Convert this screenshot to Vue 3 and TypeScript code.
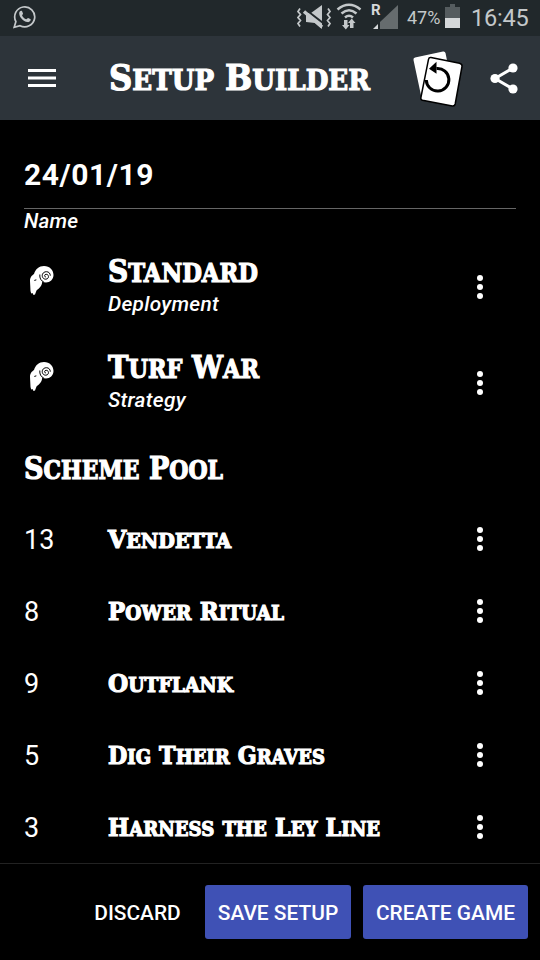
<script setup lang="ts">
import { defineComponent, h } from 'vue'

interface Heading { text: string; width: number }
interface Scheme extends Heading { id: number }

// Small-caps display lettering, fitted to a given width
const Caps = defineComponent({
  props: {
    text: { type: String, required: true },
    width: { type: Number, required: true },
    size: { type: Number, required: true },
  },
  setup(props) {
    return () => {
      const runs = props.text.match(/[A-Z]|[^A-Z]+/g) ?? []
      const height = Math.ceil(props.size * 1.2)
      return h('svg', { width: props.width + 6, height, class: 'caps' }, [
        h('text', {
          x: 0, y: props.size, 'font-size': props.size,
          textLength: props.width, lengthAdjust: 'spacingAndGlyphs',
        }, runs.map(r => h('tspan', {
          'font-size': /[A-Z]/.test(r) ? props.size : props.size * 0.81,
        }, r.toUpperCase()))),
      ])
    }
  },
})

const options: (Heading & { kind: string })[] = [
  { text: 'Standard', width: 150, kind: 'Deployment' },
  { text: 'Turf War', width: 151, kind: 'Strategy' },
]
const schemes: Scheme[] = [
  { id: 13, text: 'Vendetta', width: 123 },
  { id: 8, text: 'Power Ritual', width: 176 },
  { id: 9, text: 'Outflank', width: 125 },
  { id: 5, text: 'Dig Their Graves', width: 217 },
  { id: 3, text: 'Harness the Ley Line', width: 272 },
]
</script>

<template>
  <div class="screen">
    <div class="status">
      <svg class="whatsapp" width="24" height="24" viewBox="0 0 24 24">
        <path d="M1.2 22.2 2.9 16.6A10 10 0 1 1 7 20.7Z" fill="none" stroke="#c4c8ca" stroke-width="1.7" />
        <path d="M6.2 8.2c0-1.2 1-2.4 1.9-2.4.7 0 .9.2 1.1.8l.8 2c.2.5-.9 1.4-.9 1.8.8 1.8 2.2 3.1 4.1 3.9.5.2 1.3-1.5 1.9-1.3l2.2 1c.5.3.5.6.3 1.3-.4 1.3-1.9 2-3.1 1.8-4.5-.8-8.3-5.1-8.3-8.9Z" fill="#c4c8ca" />
      </svg>
      <svg class="indicators" width="128" height="36" viewBox="0 0 128 36">
        <path d="M3.5 8.500 1.500 11.500 4 14.500 1.500 17.500 4 20.500 1.500 23.500 3.500 26.500M31.500 8.500l2 3-2.500 3 2.500 3-2.500 3 2.500 3-2 3" transform="translate(-.5)" fill="none" stroke="#c4c8ca" stroke-width="1.700" />
        <path d="M9 13h5L25 5v24l-7-6-9-1Z" fill="#c4c8ca" />
        <path d="M8 9 28 24.500" stroke="#21282b" stroke-width="2" />
        <path d="M7 11.500 25 27" stroke="#c4c8ca" stroke-width="3.500" />
        <path d="M41 9.500Q52.500 0 64 9.500M45 13.500q7.500-6.500 15 0M48.500 17.500q4-3.500 8 0" transform="translate(-.5)" fill="none" stroke="#c4c8ca" stroke-width="2.500" />
        <path d="M47 20h3.500v5h2L48.800 29.500 45 25h2Zm6 8v-5h-2l3.700-4.500L58.500 23h-2v5Z" fill="#c4c8ca" />
        <text x="74" y="15" class="roaming">R</text>
        <path d="M101 5v24H83V22Z" fill="#666c6e" />
        <path d="M81 24v5h-5Z" fill="#d5d8da" />
      </svg>
      <span class="percent">47%</span>
      <svg class="battery" width="15" height="24" viewBox="0 0 15 24">
        <path d="M0 3h5V0h5v3h5v12H0Z" fill="#555c5f" /><path d="M0 14h15v10H0Z" fill="#d5d8da" />
      </svg>
      <span class="clock">16:45</span>
    </div>

    <header class="appbar">
      <svg class="menu" width="28" height="19" viewBox="0 0 28 19">
        <path d="M0 0h28v3H0ZM0 7.500h28v3H0ZM0 15h28v3H0Z" fill="#fff" />
      </svg>
      <Caps class="title" text="Setup Builder" :width="261" :size="35" />
      <svg class="cards" width="52" height="58" viewBox="0 0 52 58">
        <path d="M3 6.500 31 .5q2-.4 2.500 1.500L42 44 10 49 1.500 9Q1 7 3 6.500Z" fill="#fff" />
        <path d="M19 6.500 47.500 12.200Q50.500 13 50 15.500L43.200 53Q42.700 55.400 40.300 55L10.500 49.300Q8.400 48.800 8.900 46.500L16.500 8.300Q17 6.100 19 6.500Z" fill="#fff" stroke="#000" stroke-width="1.500" />
        <path d="M14.300 29A11.300 11.300 0 1 0 24.500 17.500" fill="none" stroke="#000" stroke-width="3" />
        <path d="M17 17.800 24.500 10.800v12Z" fill="#000" />
      </svg>
      <svg class="share" width="28" height="31" viewBox="0 0 28 31">
        <path d="M23 5 5 15.500 23 26" fill="none" stroke="#fff" stroke-width="3" />
        <circle cx="23" cy="5" r="4.600" fill="#fff" /><circle cx="5" cy="15.500" r="4.600" fill="#fff" /><circle cx="23" cy="26" r="4.600" fill="#fff" />
      </svg>
    </header>

    <main>
      <div class="field"><div class="date">24/01/19</div><label>Name</label></div>
      <div v-for="o in options" :key="o.kind" class="option">
        <svg class="ram" width="24" height="30" viewBox="0 0 24 30">
          <path d="M0 15C0 11 2 9.500 4 8 5.500 3 9 0 14 0 19.800 0 23.500 4 23.500 9c0 4.500-3.500 7.500-7.500 7.500-1.500 0-2.800-.3-3.800-.8-.2 4-2.700 6.300-5.700 8.800L5 28.500 3.500 29 2.500 27l-1.300.5L.5 25Z" fill="#fff" />
          <path d="M16 10.800c-1.500.6-2.300-2.300.2-2.500 3.200 0 3 4.900-.4 4.900-4.700 0-5-7.300.6-7.500 2.600 0 3.900 1.900 3.900 4M9.800 8.500c-.3 3.500 1 6.300 4 7.500" fill="none" stroke="#000" stroke-width="1" />
          <path d="M3.800 14.500q1.500-1.500 3-.8-1 1.300-3 .8Z" fill="#000" />
        </svg>
        <div class="words">
          <Caps :text="o.text" :width="o.width" :size="31" />
          <div class="kind">{{ o.kind }}</div>
        </div>
        <span class="more"><i /><i /><i /></span>
      </div>
      <h2><Caps text="Scheme Pool" :width="199" :size="31" /></h2>
      <div v-for="s in schemes" :key="s.id" class="scheme">
        <span class="num">{{ s.id }}</span>
        <Caps class="name" :text="s.text" :width="s.width" :size="24.500" />
        <span class="more"><i /><i /><i /></span>
      </div>
    </main>

    <footer>
      <button class="plain">DISCARD</button>
      <button class="save">SAVE SETUP</button>
      <button class="create">CREATE GAME</button>
    </footer>
  </div>
</template>

<style>
body { margin: 0; background: #000; }
</style>

<style scoped>
.screen { width: 540px; height: 960px; display: flex; flex-direction: column; overflow: hidden; background: #000; color: #fff; font-family: Roboto, sans-serif; }
.status { height: 36px; flex: none; display: flex; align-items: flex-start; background: #21282b; color: #c4c8ca; }
.whatsapp { margin: 5px 0 0 13px; }
.indicators { margin-left: 260px; flex: none; }
.roaming { font: bold 15px Roboto, sans-serif; fill: #d5d8da; }
.percent { width: 38px; margin-left: -18px; font-size: 18px; line-height: 36px; }
.battery { margin-top: 4px; }
.clock { margin-left: 11px; font-size: 23.5px; line-height: 36px; letter-spacing: -.2px; }
.appbar { height: 84px; flex: none; display: flex; align-items: flex-start; background: #2d343a; }
.menu { margin: 33px 0 0 28px; }
.caps { display: block; flex: none; overflow: visible; font-family: "DejaVu Serif", serif; font-weight: 700; fill: #fff; stroke: #fff; stroke-width: 1.2px; word-spacing: 2px; }
.title { margin: 19px 0 0 53px; }
.cards { margin: 15px 0 0 36px; }
.share { margin: 27px 0 0 26px; }
main { height: 743px; flex: none; }
.field { height: 120px; margin: 0 24px; }
.date { height: 89px; box-sizing: border-box; padding-top: 37px; border-bottom: 1px solid #666; font-size: 30px; line-height: 36px; font-weight: 700; letter-spacing: .55px; }
label { display: block; font-size: 20.8px; line-height: 25px; font-weight: 500; font-style: italic; letter-spacing: .2px; }
.option { height: 96px; display: flex; }
.ram { margin: 26px 0 0 30px; }
.words { width: 360px; margin-left: 54px; padding-top: 11px; }
.kind { margin-top: 3px; font-size: 20.8px; line-height: 24px; font-weight: 500; font-style: italic; letter-spacing: .3px; }
.more { width: 6px; height: 24px; display: flex; flex-direction: column; justify-content: space-between; }
.more i { width: 6px; height: 6px; border-radius: 50%; background: #fff; }
.option .more { margin: 35px 0 0 9px; }
h2 { height: 71px; margin: 0 0 0 24px; box-sizing: border-box; padding-top: 16px; }
.scheme { height: 72px; display: flex; align-items: center; }
.name { margin-top: -2px; }
.num { width: 84px; margin-left: 24px; padding-top: 2px; font-size: 27px; line-height: 36px; }
.scheme .more { margin: 0 57px 0 auto; }
footer { flex: 1; display: flex; justify-content: flex-end; align-items: flex-start; gap: 12px; padding: 21px 12px 0 0; border-top: 1px solid #222; }
button { height: 54px; padding: 2px 0 0; border: 0; border-radius: 3px; background: #3f51b5; color: #fff; font: 500 20.9px Roboto, sans-serif; white-space: nowrap; }
.plain { width: 111px; background: transparent; }
.save { width: 146px; }
.create { width: 165px; }
</style>
